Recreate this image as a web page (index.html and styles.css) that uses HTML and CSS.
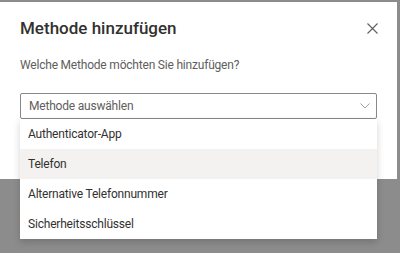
FILE: index.html
```html
<!DOCTYPE html>
<html lang="de">
<head>
    <meta charset="UTF-8">
    <title>Methode hinzufügen</title>
    <link rel="stylesheet" href="styles.css">
</head>
<body>
    <div class="dialog">
        <div class="dialog-header">
            <h1>Methode hinzufügen</h1>
            <button class="close" aria-label="Schließen">
                <svg width="11" height="11" viewBox="0 0 11 11"><path d="M0.5 0.5l10 10M10.5 0.5l-10 10" stroke="#605e5c" stroke-width="1.1" fill="none"/></svg>
            </button>
        </div>
        <p class="question">Welche Methode möchten Sie hinzufügen?</p>
        <div class="dropdown">
            <div class="select">
                <span>Methode auswählen</span>
                <svg width="10" height="6" viewBox="0 0 10 6"><path d="M0.5 0.5l4.5 4.5 4.5-4.5" stroke="#a19f9d" stroke-width="1" fill="none"/></svg>
            </div>
            <ul class="options">
                <li>Authenticator-App</li>
                <li class="hover">Telefon</li>
                <li>Alternative Telefonnummer</li>
                <li>Sicherheitsschlüssel</li>
            </ul>
        </div>
    </div>
</body>
</html>
```

FILE: styles.css
```css
html {
    height: 100%;
}

body {
    margin: 0;
    min-height: 100%;
    background: #8c8c8c;
    font-family: 'Roboto', 'Open Sans', sans-serif;
    color: #323130;
}

.dialog {
    width: 397px;
    height: 177px;
    margin-top: 2px;
    background: #fff;
    box-sizing: border-box;
    padding: 0 20px;
}

.dialog-header {
    display: flex;
    align-items: center;
    justify-content: space-between;
    height: 50px;
    padding-top: 1px;
}

h1 {
    margin: 0;
    font-size: 17px;
    font-weight: 500;
}

.close {
    border: none;
    background: none;
    padding: 0;
    margin-right: -1px;
    display: flex;
}

.question {
    margin: 4px 0 0;
    font-size: 12px;
    line-height: 16px;
    letter-spacing: -0.2px;
    color: #605e5c;
}

.dropdown {
    position: relative;
    margin-top: 20px;
}

.select {
    height: 26px;
    box-sizing: border-box;
    border: 1px solid #8a8886;
    border-radius: 2px;
    display: flex;
    align-items: center;
    justify-content: space-between;
    padding: 0 6px 0 8px;
    font-size: 12px;
    letter-spacing: -0.2px;
    color: #605e5c;
}

.options {
    position: absolute;
    top: 26px;
    left: 0;
    right: 0;
    z-index: 1;
    list-style: none;
    margin: 0;
    padding: 0;
    background: #fff;
    box-shadow: 0 3px 7px rgba(0, 0, 0, 0.18);
}

.options li {
    height: 30px;
    line-height: 30px;
    padding-left: 8px;
    font-size: 12px;
    letter-spacing: -0.2px;
}

.options li.hover {
    background: #f3f2f1;
}
```
